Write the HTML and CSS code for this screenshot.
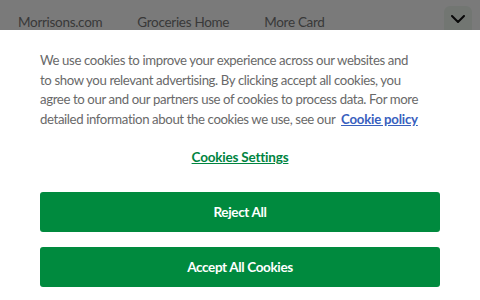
FILE: index.html
```html
<!DOCTYPE html>
<html lang="en">
<head>
<meta charset="utf-8">
<title>Morrisons</title>
<link rel="stylesheet" href="styles.css">
</head>
<body>
<header class="site-header">
  <nav class="site-nav">
    <a class="nav-link" href="#">Morrisons.com</a>
    <a class="nav-link" href="#">Groceries Home</a>
    <a class="nav-link" href="#">More Card</a>
  </nav>
  <button class="nav-toggle" aria-label="More">
    <svg width="14" height="8" viewBox="0 0 14 8"><path d="M1 1l6 6 6-6" fill="none" stroke="#111" stroke-width="2" stroke-linecap="round" stroke-linejoin="round"/></svg>
  </button>
</header>
<div class="dim"></div>
<section class="cookie-banner">
  <p class="cookie-text">We use cookies to improve your experience across our websites and<br>to show you relevant advertising. By clicking accept all cookies, you<br>agree to our and our partners use of cookies to process data. For more<br>detailed information about the cookies we use, see our <a class="policy-link" href="#">Cookie policy</a></p>
  <a class="settings-link" href="#">Cookies Settings</a>
  <div class="actions">
    <button class="btn">Reject All</button>
    <button class="btn">Accept All Cookies</button>
  </div>
</section>
</body>
</html>
```
FILE: styles.css
```css
html, body {
  margin: 0;
  padding: 0;
  height: 100%;
  overflow: hidden;
  background: #fff;
  font-family: "Lato", "Open Sans", sans-serif;
}
.site-header {
  display: flex;
  align-items: flex-start;
  justify-content: space-between;
  padding: 6px 8px 0 18px;
  height: 60px;
}
.site-nav {
  display: flex;
  gap: 35px;
  padding-top: 6px;
}
.nav-link {
  color: #787878;
  text-decoration: none;
  font-size: 13.5px;
  letter-spacing: -0.3px;
  line-height: 20px;
}
.nav-toggle {
  width: 28px;
  height: 30px;
  border: 0;
  border-radius: 6px;
  background: #eef6ef;
  display: flex;
  align-items: center;
  justify-content: center;
  padding: 0 0 4px;
}
.dim {
  position: fixed;
  inset: 0;
  background: rgba(0, 0, 0, 0.52);
}
.cookie-banner {
  position: fixed;
  left: 0;
  right: 0;
  top: 30px;
  bottom: 0;
  background: #fff;
  padding: 21px 40px 0;
  display: flex;
  flex-direction: column;
}
.cookie-text {
  margin: 0;
  color: #696969;
  font-size: 13.2px;
  line-height: 19.7px;
  letter-spacing: -0.38px;
  white-space: nowrap;
}
.policy-link {
  color: #3860be;
  font-weight: 700;
  margin-left: 3px;
  letter-spacing: -0.2px;
}
.settings-link {
  align-self: center;
  margin-top: 17px;
  color: #00843f;
  font-weight: 700;
  font-size: 13.5px;
  letter-spacing: -0.2px;
  line-height: 20px;
}
.actions {
  display: flex;
  flex-direction: column;
  gap: 15px;
  margin-top: 25px;
}
.btn {
  height: 40px;
  border: 0;
  border-radius: 3px;
  background: #008a3e;
  color: #fff;
  font-family: inherit;
  font-weight: 700;
  font-size: 13.5px;
  letter-spacing: -0.35px;
}
```
